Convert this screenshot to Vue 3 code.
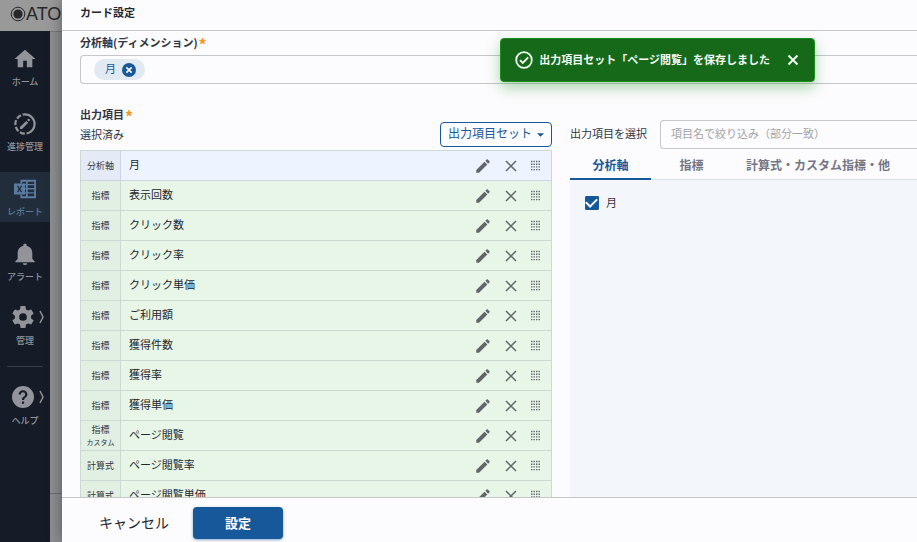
<template>
  <div class="page">
    <header class="topbar">
      <svg class="topbar__mark" viewBox="0 0 16 16">
        <circle cx="8" cy="8" r="6.8" fill="none" stroke="currentColor" stroke-width="1" />
        <circle cx="8" cy="8" r="4.6" fill="currentColor" />
      </svg>
      <span>ATO</span>
    </header>

    <nav class="sidebar">
      <template v-for="item in menu" :key="item.label">
        <hr v-if="item.separated" class="sidebar__line" />
        <a
          href="#"
          class="sidebar__item"
          :class="{ 'sidebar__item--active': item.active, 'sidebar__item--nested': item.nested }"
        >
          <span class="sidebar__icon">
            <svg viewBox="0 0 24 24">
              <path v-for="d in item.paths" :key="d" :d="d" fill="currentColor" fill-rule="evenodd" />
              <path v-if="item.dash" :d="item.dash" fill="none" stroke="currentColor" stroke-width="2.4" stroke-dasharray="31 2 5.500 2 5.500 2 5.500 2 5.500 2" />
            </svg>
            <svg v-if="item.nested" class="sidebar__arrow" viewBox="0 0 6 14">
              <path d="M1 1l3 6-3 6" fill="none" stroke="currentColor" stroke-width="1.5" />
            </svg>
          </span>
          <span class="sidebar__label">{{ item.label }}</span>
        </a>
      </template>
    </nav>

    <main class="backdrop"></main>

    <section class="dialog" role="dialog" aria-labelledby="dialog-title">
      <h2 id="dialog-title" class="dialog__title">カード設定</h2>

      <div class="dialog__body">
        <h3 class="heading">分析軸(ディメンション)<span class="required">*</span></h3>
        <div class="dimension">
          <span class="chip">
            <span class="chip__text">月</span>
            <button type="button" class="chip__remove" aria-label="削除">
              <svg viewBox="0 0 14 14">
                <circle cx="7" cy="7" r="7" fill="#17589b" />
                <path d="M4.4 4.4l5.2 5.2M9.6 4.4l-5.2 5.2" stroke="#fff" stroke-width="1.6" />
              </svg>
            </button>
          </span>
        </div>

        <h3 class="heading heading--output">出力項目<span class="required">*</span></h3>
        <div class="columns">
          <div class="selected">
            <div class="selected__head">
              <span class="selected__title">選択済み</span>
              <button type="button" class="set-button">
                <span class="set-button__text">出力項目セット</span>
                <svg viewBox="0 0 8 4"><path d="M0 0h8L4 4z" fill="currentColor" /></svg>
              </button>
            </div>

            <table class="items">
              <tbody>
                <tr v-for="row in rows" :key="row.name" :class="{ 'items__axis': row.type === '分析軸' }">
                  <th scope="row" class="items__type">
                    {{ row.type }}
                    <small v-if="row.note">{{ row.note }}</small>
                  </th>
                  <td class="items__name">{{ row.name }}</td>
                  <td class="items__tools">
                    <div class="tools">
                      <button type="button" aria-label="編集">
                        <svg viewBox="0 0 24 24">
                          <path fill="currentColor" d="M20.71 7.04c.39-.39.39-1.04 0-1.41l-2.34-2.34c-.37-.39-1.02-.39-1.41 0l-1.84 1.83 3.75 3.75M3 17.25V21h3.75L17.81 9.93l-3.75-3.75L3 17.25z" />
                        </svg>
                      </button>
                      <button type="button" aria-label="削除">
                        <svg viewBox="0 0 18 18">
                          <path d="M4 4l10 10M14 4L4 14" fill="none" stroke="currentColor" stroke-width="1.5" />
                        </svg>
                      </button>
                      <button type="button" aria-label="並べ替え">
                        <svg class="tools__grip" viewBox="0 0 11 18">
                          <path
                            d="M1 4.500h9M1 7.200h9M1 9.900h9M1 12.600h9"
                            fill="none"
                            stroke="currentColor"
                            stroke-width="1.400"
                            stroke-dasharray="1.400 1.100"
                          />
                        </svg>
                      </button>
                    </div>
                  </td>
                </tr>
              </tbody>
            </table>
          </div>

          <div class="picker">
            <div class="picker__head">
              <label for="filter">出力項目を選択</label>
              <input id="filter" v-model="filter" type="text" placeholder="項目名で絞り込み（部分一致）" />
            </div>
            <div class="tabs" role="tablist">
              <button
                v-for="tab in tabs"
                :key="tab"
                type="button"
                role="tab"
                class="tabs__item"
                :class="{ 'tabs__item--active': tab === currentTab }"
                :aria-selected="tab === currentTab"
                @click="currentTab = tab"
              >
                {{ tab }}
              </button>
            </div>
            <div class="picker__panel">
              <label v-if="currentTab === '分析軸'" class="check">
                <input v-model="monthChecked" type="checkbox" />
                <span>月</span>
              </label>
            </div>
          </div>
        </div>
      </div>

      <footer class="dialog__footer">
        <button type="button" class="cancel">キャンセル</button>
        <button type="button" class="submit">設定</button>
      </footer>
    </section>

    <div v-if="toastVisible" class="toast" role="status">
      <svg class="toast__icon" viewBox="0 0 18 18">
        <circle cx="9" cy="9" r="7.8" fill="none" stroke="currentColor" stroke-width="1.8" />
        <path d="M5 9.2l2.8 2.7L13.2 6.3" fill="none" stroke="currentColor" stroke-width="1.8" />
      </svg>
      <span class="toast__text">出力項目セット「ページ閲覧」を保存しました</span>
      <button type="button" class="toast__close" aria-label="閉じる" @click="toastVisible = false">
        <svg viewBox="0 0 12 12">
          <path d="M1.5 1.5l9 9M10.5 1.5l-9 9" stroke="currentColor" stroke-width="1.9" />
        </svg>
      </button>
    </div>
  </div>
</template>

<script setup>
  import { ref } from "vue";

  const filter = ref("");
  const monthChecked = ref(true);
  const toastVisible = ref(true);

  const tabs = ["分析軸", "指標", "計算式・カスタム指標・他"];
  const currentTab = ref(tabs[0]);

  const rows = [
    { type: "分析軸", name: "月" },
    { type: "指標", name: "表示回数" },
    { type: "指標", name: "クリック数" },
    { type: "指標", name: "クリック率" },
    { type: "指標", name: "クリック単価" },
    { type: "指標", name: "ご利用額" },
    { type: "指標", name: "獲得件数" },
    { type: "指標", name: "獲得率" },
    { type: "指標", name: "獲得単価" },
    { type: "指標", note: "カスタム", name: "ページ閲覧" },
    { type: "計算式", name: "ページ閲覧率" },
    { type: "計算式", name: "ページ閲覧単価" },
  ];

  const menu = [
    {
      label: "ホーム",
      paths: ["M10 21v-7h4v7h6v-9h3.500L12 2 .5 12H4v9z"],
    },
    {
      label: "進捗管理",
      paths: ["M17.200 8.300c.4-.4.4-.9 0-1.300l-.5-.5c-.4-.4-.9-.4-1.300 0l-1.100 1.100 1.800 1.800zM6.500 15.200v2.300h2.300l6.600-6.900-2-2z"],
      dash: "M12 1.500a10.500 10.500 0 1 1 0 21a10.500 10.500 0 1 1 0-21",
    },
    {
      label: "レポート",
      active: true,
      paths: [
        "M7 2h17v20H7v-4h2v2h4v-3h-1v-1.500h1v-3h-1V11h1V8h-1V6.500h1V4H9v2H7zM15 4v2.500h7V4zM15 8v3h7V8zM15 12.500v3h7v-3zM15 17v3h7v-3z",
        "M0 6h12v12H0zM3 8.500L5 12l-2 3.500h1.700L6 13.200l1.300 2.300H9L7 12l2-3.500H7.300L6 10.800 4.700 8.500z",
      ],
    },
    {
      label: "アラート",
      paths: ["M12 .5c-1 0-1.800.8-1.800 1.800v.7C6.500 3.900 4 7 4 11v6.500L1.500 20v1h21v-1L20 17.500V11c0-4-2.500-7.100-6.200-8v-.7c0-1-.8-1.800-1.800-1.800zM9.600 22h4.800a2.400 2 0 0 1-4.800 0z"],
    },
    {
      label: "管理",
      nested: true,
      paths: [
        "M9.400 0h5.200l.7 3.700 2.200 1.300L21 3.700l2.600 4.500-2.800 2.500v2.600l2.800 2.500-2.600 4.500-3.500-1.300-2.200 1.300-.7 3.700H9.400l-.7-3.700L6.500 19 3 20.300.4 15.800l2.800-2.500v-2.600L.4 8.200 3 3.700 6.500 5l2.200-1.300zM12 7.800a4.200 4.200 0 1 0 0 8.400a4.200 4.200 0 1 0 0-8.400z",
      ],
    },
    {
      label: "ヘルプ",
      nested: true,
      separated: true,
      paths: [
        "M12 0a12 12 0 1 0 0 24a12 12 0 1 0 0-24zM10.800 17h2.400v2.400h-2.400zM7.200 9.300a4.800 4.800 0 0 1 9.600 0c0 3-3.500 3.400-3.600 6h-2.400c0-3.700 3.600-3.700 3.600-6a2.400 2.400 0 0 0-4.800 0z",
      ],
    },
  ];
</script>

<style>
body {
  margin: 0;
  overflow: hidden;
}
</style>

<style scoped>
.page {
  position: relative;
  display: grid;
  grid-template: 31px minmax(0, 1fr) / 50px minmax(0, 1fr);
  height: 100vh;
  background: #8d8e90;
  color: #33343f;
  font: 11px/16px "Noto Sans CJK JP", "Noto Sans", sans-serif;
}

.page * {
  box-sizing: border-box;
}

button {
  padding: 0;
  border: 0;
  background: none;
  color: inherit;
  font: inherit;
  cursor: pointer;
}

svg {
  display: block;
}

.topbar {
  grid-column: 1 / -1;
  display: flex;
  align-items: center;
  padding: 0 0 3px 10px;
  background: #999;
  color: #27282c;
  font: 18px/28px "Liberation Sans", sans-serif;
}

.topbar__mark {
  width: 16px;
  height: 16px;
}

.sidebar {
  display: flex;
  flex-direction: column;
  gap: 15px;
  padding-top: 11px;
  background: #151b27;
}

.sidebar__item {
  display: flex;
  flex-direction: column;
  align-items: center;
  height: 50px;
  padding-top: 6px;
  color: #929499;
  font-size: 9px;
  font-weight: 500;
  line-height: 14px;
  text-decoration: none;
}

.sidebar__item--active {
  background: #222d3b;
  color: #5a7ca0;
}

.sidebar__icon {
  position: relative;
  width: 22px;
  height: 22px;
  margin-bottom: 5px;
}

.sidebar__item--nested {
  padding-top: 4px;
}

.sidebar__item--nested .sidebar__icon {
  margin-right: 4px;
  margin-bottom: 6px;
}

.sidebar__arrow {
  position: absolute;
  top: 4px;
  left: 27px;
  width: 6px;
  height: 14px;
}

.sidebar__line {
  width: 36px;
  height: 1px;
  margin: -1px auto 0;
  border: 0;
  background: #383c46;
}

.backdrop {
  margin-bottom: 48px;
  border-top: 1px solid #77787a;
  border-bottom: 1px solid #6e6f71;
}

.dialog {
  position: absolute;
  inset: 0 0 0 62px;
  display: flex;
  flex-direction: column;
  background: #fcfcfe;
  box-shadow: 0 0 14px rgba(0, 0, 0, 0.4);
}

.dialog__title {
  margin: 0;
  padding: 4px 18px 10px;
  border-bottom: 1px solid #c4c6ca;
  color: #25262e;
  font-size: 11px;
  font-weight: 700;
}

.dialog__body {
  flex: 1;
  display: flex;
  flex-direction: column;
  min-height: 0;
  padding: 3px 0 0 18px;
  overflow: hidden;
}

.heading {
  display: flex;
  gap: 1px;
  margin: 0;
  font-size: 11px;
  font-weight: 700;
  line-height: 16px;
}

.heading--output {
  margin-top: 22px;
}

.required {
  height: 16px;
  color: #f8971d;
  font-size: 16px;
  line-height: 20px;
}

.dimension {
  display: flex;
  flex-shrink: 0;
  align-items: center;
  height: 29px;
  margin-top: 5px;
  padding-left: 13px;
  border: 1px solid #c4c6ca;
  border-right: 0;
  border-radius: 4px 0 0 4px;
}

.chip {
  display: flex;
  align-items: center;
  gap: 6px;
  height: 21px;
  padding: 0 9px 0 11px;
  border-radius: 11px;
  background: #e1e9f2;
  color: #17589b;
}

.chip__text {
  padding-bottom: 3px;
}

.chip__remove svg {
  width: 14px;
  height: 14px;
}

.columns {
  flex: 1;
  display: grid;
  grid-template-columns: minmax(0, 34fr) minmax(0, 25fr);
  column-gap: 18px;
  min-height: 0;
}

.selected__head {
  display: flex;
  align-items: center;
  justify-content: space-between;
  height: 28px;
  padding-bottom: 3px;
}

.selected__title {
  padding-bottom: 2px;
}

.set-button {
  display: flex;
  align-items: center;
  gap: 5px;
  height: 25px;
  padding: 0 7px;
  border: 1px solid #17589b;
  border-radius: 4px;
  color: #17589b;
  font-size: 12px;
}

.set-button__text {
  padding-bottom: 3px;
}

.set-button svg {
  width: 7px;
  height: 4px;
}

.items {
  width: 100%;
  border: 1px solid #cbd8d4;
  border-collapse: collapse;
  table-layout: fixed;
  background: #e8f6e8;
}

.items tr {
  height: 30px;
  border-bottom: 1px solid #cbd8d4;
}

.items__type {
  width: 40px;
  padding: 0;
  border-right: 1px solid #cbd8d4;
  background: #e1f0e3;
  font-size: 9px;
  font-weight: 400;
  line-height: 14px;
}

.items__type small {
  display: block;
  margin-top: -1px;
  font-size: 7px;
  line-height: 12px;
}

.items__name {
  padding: 0 8px 4px;
  color: #25262e;
}

.items__axis {
  background: #edf4ff;
}

.items__axis .items__type {
  background: #e4ebf7;
}

.items .items__axis,
.items__axis .items__type {
  border-color: #ccd4e2;
}

.items__tools {
  width: 86px;
  padding: 0;
}

.tools {
  display: flex;
  gap: 10px;
  padding-left: 9px;
  color: #62666a;
}

.tools svg {
  width: 18px;
  height: 18px;
}

.tools .tools__grip {
  width: 11px;
}

.picker {
  display: flex;
  flex-direction: column;
}

.picker__head {
  display: flex;
  align-items: center;
  gap: 13px;
  height: 29px;
  margin-top: -2px;
}

.picker__head label {
  padding-bottom: 4px;
  white-space: nowrap;
}

.picker__head input {
  flex: 1;
  min-width: 0;
  height: 29px;
  padding: 0 10px 4px;
  border: 1px solid #c4c6ca;
  border-right: 0;
  border-radius: 4px 0 0 4px;
  background: none;
  color: inherit;
  font: inherit;
}

.picker__head input::placeholder {
  color: #a3a4a8;
}

.tabs {
  display: flex;
  height: 31px;
  border-bottom: 1px solid #d9dde4;
}

.tabs__item {
  min-width: 81px;
  height: 31px;
  padding: 3px 14px 0;
  border-bottom: 2px solid transparent;
  color: #747684;
  font-size: 12px;
  font-weight: 700;
  white-space: nowrap;
}

.tabs__item--active {
  border-bottom-color: #17589b;
  color: #17589b;
}

.picker__panel {
  flex: 1;
  padding: 14px 15px;
  background: #f3f7fc;
}

.check {
  display: flex;
  align-items: center;
  gap: 7px;
}

.check span {
  padding-bottom: 1px;
}

.check input {
  display: grid;
  place-items: center;
  width: 14px;
  height: 14px;
  margin: 0;
  border: 1px solid #17589b;
  border-radius: 1px;
  appearance: none;
}

.check input:checked {
  background: #17589b;
}

.check input:checked::after {
  content: "";
  width: 9px;
  height: 5px;
  margin-bottom: 3px;
  border: solid #fff;
  border-width: 0 0 2px 2px;
  transform: rotate(-45deg);
}

.dialog__footer {
  display: flex;
  align-items: center;
  gap: 24px;
  padding: 9px 37px 3px;
  border-top: 1px solid #c4c6ca;
}

.cancel {
  padding-bottom: 2px;
  color: #25262e;
  font-size: 14px;
}

.submit {
  width: 90px;
  height: 32px;
  border-radius: 4px;
  background: #17589b;
  box-shadow: 0 1px 3px rgba(23, 88, 155, 0.5);
  color: #fff;
  font-size: 13px;
  font-weight: 700;
}

.toast {
  position: absolute;
  top: 38px;
  right: 102px;
  display: flex;
  align-items: center;
  height: 44px;
  padding: 0 15px 0 14px;
  border: 1px solid #16901b;
  border-radius: 4px;
  background: #17691a;
  box-shadow: 0 6px 14px rgba(22, 144, 27, 0.35);
  color: #f4faf4;
  font-weight: 700;
}

.toast__icon {
  width: 18px;
  height: 18px;
  margin-right: 6px;
}

.toast__text {
  padding-bottom: 3px;
}

.toast__close {
  margin-left: 17px;
}

.toast__close svg {
  width: 12px;
  height: 12px;
}
</style>
